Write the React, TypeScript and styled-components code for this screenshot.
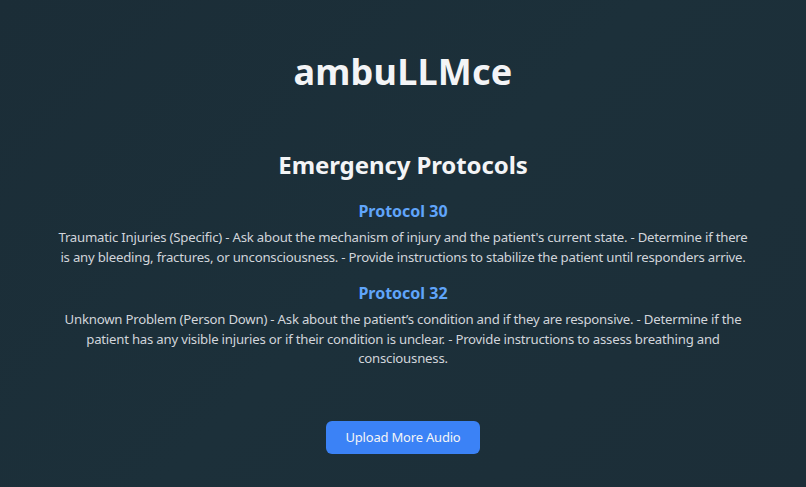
import React from "react";
import styled, { createGlobalStyle } from "styled-components";

const Global = createGlobalStyle`
  html, body { margin: 0; padding: 0; }
  body {
    font-family: "Noto Sans", "Open Sans", sans-serif;
    background: #1c2f39;
  }
`;

const Page = styled.div`
  min-height: 487px;
  box-sizing: border-box;
  background: linear-gradient(135deg, #1b2d37 0%, #1c303a 50%, #1c2e38 100%);
  display: flex;
  flex-direction: column;
  align-items: center;
  padding-top: 52px;
  color: #e5e7eb;
`;

const Title = styled.h1`
  margin: 0;
  font-size: 36px;
  line-height: 40px;
  font-weight: 700;
  color: #f3f4f6;
  letter-spacing: 0.2px;
`;

const Section = styled.section`
  margin-top: 57px;
  width: 700px;
  display: flex;
  flex-direction: column;
  align-items: center;
  text-align: center;
`;

const SectionTitle = styled.h2`
  margin: 0 0 16px;
  font-size: 24px;
  line-height: 32px;
  font-weight: 700;
  color: #f3f4f6;
  letter-spacing: -0.1px;
`;

const Protocol = styled.div`
  display: flex;
  flex-direction: column;
  align-items: center;
  margin-bottom: 12px;
`;

const ProtocolTitle = styled.h3`
  margin: 0 0 3px;
  font-size: 16px;
  line-height: 28px;
  font-weight: 700;
  color: #60a5fa;
`;

const ProtocolText = styled.p`
  margin: 0;
  font-size: 13.2px;
  letter-spacing: -0.22px;
  line-height: 19.5px;
  color: #d1d5db;
`;

const UploadButton = styled.button`
  margin-top: 40px;
  width: 154px;
  height: 33px;
  border: none;
  border-radius: 6px;
  background: #3b82f6;
  color: #f3f4f6;
  font-family: inherit;
  font-size: 13px;
  letter-spacing: -0.2px;
  cursor: pointer;
`;

const protocols = [
  {
    id: 30,
    text: "Traumatic Injuries (Specific) - Ask about the mechanism of injury and the patient's current state. - Determine if there is any bleeding, fractures, or unconsciousness. - Provide instructions to stabilize the patient until responders arrive.",
  },
  {
    id: 32,
    text: "Unknown Problem (Person Down) - Ask about the patient\u2019s condition and if they are responsive. - Determine if the patient has any visible injuries or if their condition is unclear. - Provide instructions to assess breathing and consciousness.",
  },
];

export default function App() {
  return (
    <>
      <Global />
      <Page>
        <Title>ambuLLMce</Title>
        <Section>
          <SectionTitle>Emergency Protocols</SectionTitle>
          {protocols.map((p) => (
            <Protocol key={p.id}>
              <ProtocolTitle>Protocol {p.id}</ProtocolTitle>
              <ProtocolText>{p.text}</ProtocolText>
            </Protocol>
          ))}
        </Section>
        <UploadButton>Upload More Audio</UploadButton>
      </Page>
    </>
  );
}
